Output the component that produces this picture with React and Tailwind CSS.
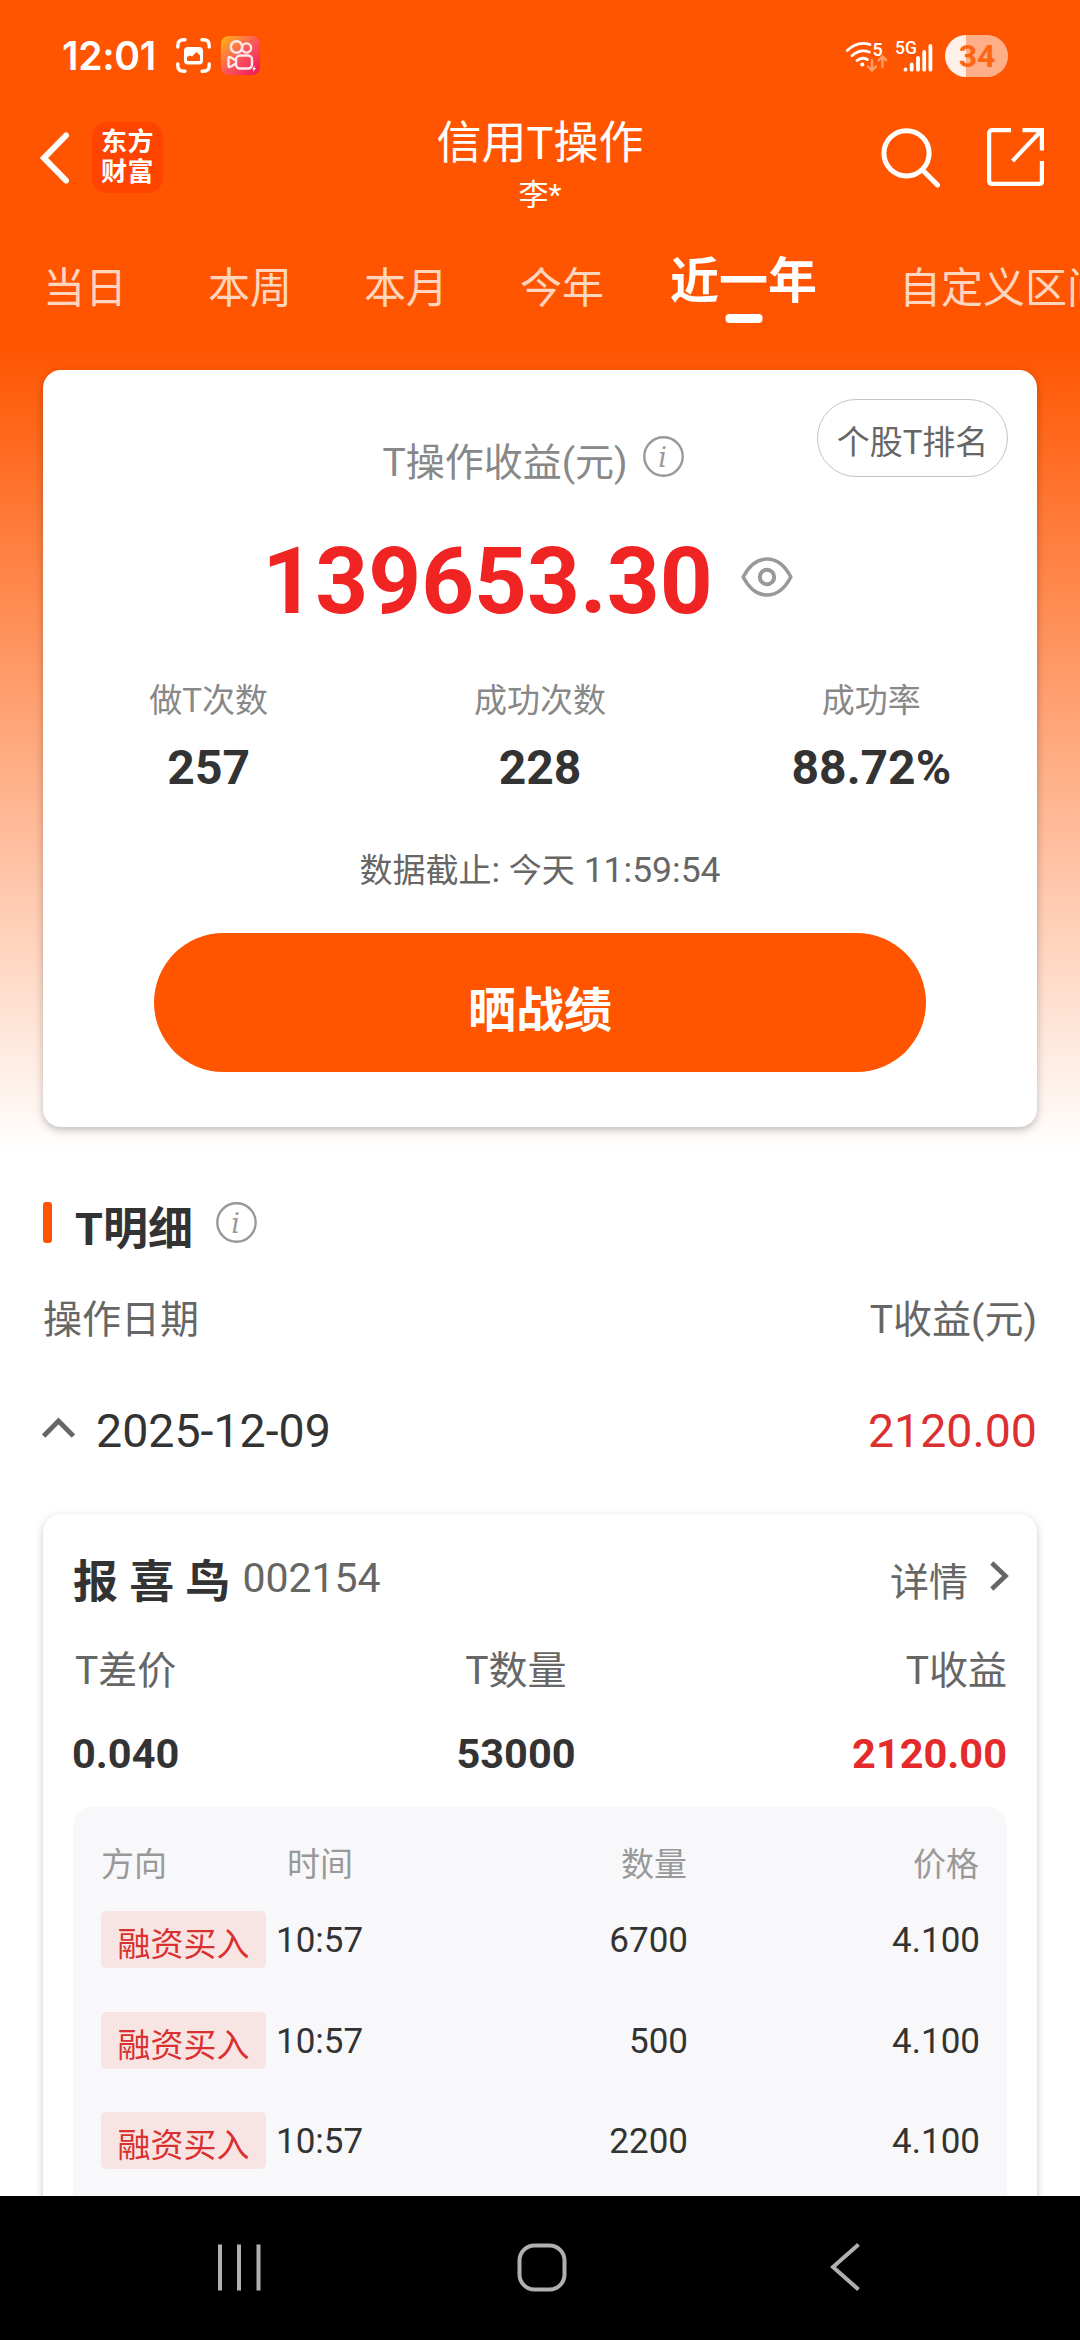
import { useState } from 'react';

const TABS = [
  { label: '当日', className: 'ml-[43px]' },
  { label: '本周', className: 'ml-[81px]' },
  { label: '本月', className: 'ml-[72px]' },
  { label: '今年', className: 'ml-[72px]' },
  { label: '近一年', className: 'ml-[66px]' },
  { label: '自定义区间', className: 'ml-[82px]' },
];

const STATS = [
  { label: '做T次数', value: '257' },
  { label: '成功次数', value: '228' },
  { label: '成功率', value: '88.72%' },
];

const TRADES = [
  { side: '融资买入', time: '10:57', amount: '6700', price: '4.100' },
  { side: '融资买入', time: '10:57', amount: '500', price: '4.100' },
  { side: '融资买入', time: '10:57', amount: '2200', price: '4.100' },
];

function InfoIcon({ className }) {
  return (
    <svg viewBox="0 0 41 41" className={`w-[41px] h-[41px] shrink-0 ${className}`}>
      <circle cx="20.5" cy="20.5" r="19.2" fill="none" stroke="#999" strokeWidth="2.4" />
      <text x="19.5" y="30.5" textAnchor="middle" fontSize="27" fontStyle="italic" fontFamily="DejaVu Serif, serif" fill="#999">i</text>
    </svg>
  );
}

function StatusBar() {
  return (
    <div className="h-[111px] shrink-0 flex items-center pl-[62px] pr-[72px]">
      <span className="w-[96px] text-[39px] leading-[48px] font-semibold font-[Inter,sans-serif] tracking-[-0.3px] whitespace-nowrap">12:01</span>

      {/* screenshot notification */}
      <svg viewBox="0 0 35 35" className="w-[35px] h-[35px] ml-[18px]" fill="none" stroke="white" strokeWidth="3.4" strokeLinecap="round">
        <path d="M1.8 9V7.5Q1.8 1.8 7.5 1.8H9M26 1.8h1.5q5.7 0 5.7 5.7V9M33.2 26v1.5q0 5.7-5.7 5.7H26M9 33.2H7.5q-5.7 0-5.7-5.7V26" />
        <rect x="8" y="9" width="19" height="17.5" rx="4" fill="white" stroke="none" />
        <path d="M11 22v-3l3-1.500 2 1 4.500-4.500 3.500 3.500v4.500q0 1-1 1H12q-1 0-1-1z" fill="#ff5500" stroke="none" />
      </svg>

      {/* kuaishou notification */}
      <svg viewBox="0 0 39 39" className="w-[39px] h-[39px] ml-[10px]" fill="none" stroke="#ffe9f0" strokeWidth="2.4">
        <defs>
          <linearGradient id="ks" x1="0" y1="0" x2="1" y2="1">
            <stop offset="0" stopColor="#fdb913" />
            <stop offset="0.5" stopColor="#fb5a5a" />
            <stop offset="1" stopColor="#f0125c" />
          </linearGradient>
        </defs>
        <rect width="39" height="39" rx="8" fill="url(#ks)" stroke="none" />
        <circle cx="15.5" cy="11" r="5.7" />
        <circle cx="25.5" cy="12" r="4.6" />
        <rect x="15" y="19.5" width="16" height="13" rx="4" />
        <path d="M15 24.5l-5.5-3.2q-2-.8-2 1v7.4q0 1.800 2 1L15 27.500" strokeLinejoin="round" />
        <path d="M33 30.500l-1.800 3h1.500l-.700 2.600 3-4h-1.800l.800-1.600z" fill="white" stroke="none" />
      </svg>

      <div className="ml-auto flex items-center">
        {/* wifi + traffic arrows */}
        <svg viewBox="0 0 42 34" className="w-[42px] h-[34px]" fill="none" stroke="white" strokeLinecap="round">
          <path d="M2.300 11.500Q12.500 1.500 25 5.500M7 16.800Q14.800 9.500 24.300 13M12 21.500Q17 17.500 22.300 20.500" strokeWidth="2.800" />
          <circle cx="17.300" cy="25.500" r="2.100" fill="white" stroke="none" />
          <text x="27.500" y="17" fontSize="18" fontWeight="600" fontFamily="Roboto, sans-serif" fill="white" stroke="none">5</text>
          <path d="M27 21v10M23 27.500l4 4 4-4M37.500 28V18M33.500 21.500l4-4 4 4" stroke="#ff9d6b" strokeWidth="2.400" />
        </svg>
        {/* signal */}
        <svg viewBox="0 0 38 34" className="w-[38px] h-[34px] ml-[8px]" stroke="white" strokeWidth="3.800" strokeLinecap="round">
          <text x="0" y="14.500" fontSize="17.500" fontWeight="500" fontFamily="Roboto, sans-serif" fill="white" stroke="none">5G</text>
          <path d="M10.500 30.500v.2M16.700 25.500v5.200M23 19V30.700M29.200 13V30.700M35.400 7V30.700" fill="none" />
        </svg>
        <div className="w-[63px] h-[42px] ml-[12px] rounded-full overflow-hidden bg-[linear-gradient(90deg,#fff1ea_21px,#ffaf88_21px)] text-[#ff6614] text-[32px] leading-[43px] font-bold text-center pl-[1px]">34</div>
      </div>
    </div>
  );
}

function AppBar() {
  return (
    <header className="h-[104px] shrink-0 grid grid-cols-[1fr_auto_1fr] items-start">
      <div className="flex items-start pl-[40px]">
        <svg viewBox="0 0 29 52" className="w-[29px] h-[52px] mt-[21px]" fill="none" stroke="white" strokeWidth="6" strokeLinecap="round">
          <path d="M26 3.500L4 26l22 22.500" />
        </svg>
        <div className="w-[71px] h-[71px] ml-[23px] mt-[11px] rounded-[15px] bg-[#ff4400] flex flex-col items-center pt-[5px] text-[26px] leading-[30px] font-bold tracking-[0.5px]">
          <span>东方</span>
          <span>财富</span>
        </div>
      </div>
      <div className="flex flex-col items-center pt-[5px]">
        <h1 className="text-[45px] leading-[55px]">信用T操作</h1>
        <span className="text-[30px] leading-[40px] mt-[4px]">李*</span>
      </div>
      <div className="flex items-start justify-end pr-[36px] pt-[17px]">
        <svg viewBox="0 0 60 60" className="w-[60px] h-[60px]" fill="none" stroke="white" strokeWidth="5" strokeLinecap="round">
          <circle cx="25.500" cy="25.300" r="22.600" />
          <path d="M41.500 42L56.500 57" />
        </svg>
        <svg viewBox="0 0 57 58" className="w-[57px] h-[58px] ml-[46px]" fill="none" stroke="white" strokeWidth="4.200">
          <path d="M24 2.100H5.500Q2.100 2.100 2.100 5.500V52.500Q2.100 55.900 5.500 55.900H51.500Q54.900 55.900 54.900 54V33M35.500 2.100H54.900V22.500M54 3L25.500 33" />
        </svg>
      </div>
    </header>
  );
}

function SummaryCard() {
  return (
    <section className="relative mx-[43px] h-[757px] shrink-0 rounded-[18px] bg-white shadow-[0_3px_8px_rgba(0,0,0,0.25)] flex flex-col">
      <button className="absolute right-[29px] top-[29px] w-[191px] h-[78px] rounded-full border border-[#c4c4c4] text-[#666] text-[33px] leading-[44px] pt-[10px]">个股T排名</button>

      <div className="flex items-start justify-center pt-[66px] pr-[14px] text-[#888]">
        <h2 className="text-[39px] leading-[48px] mt-[3px]">T操作收益(元)</h2>
        <InfoIcon className="ml-[15px]" />
      </div>

      <div className="flex items-start justify-center mt-[45px] pr-[25px]">
        <span className="text-[92.300px] leading-[100px] font-bold text-[#f12424]">139653.30</span>
        <svg viewBox="0 0 52 40" className="w-[52px] h-[40px] ml-[28px] mt-[25px]" fill="none" stroke="#999" strokeWidth="3.600">
          <path d="M2.200 20Q11.500 2 26 2T49.800 20Q40.500 38 26 38T2.200 20z" strokeLinejoin="round" />
          <circle cx="26" cy="20" r="7.200" strokeWidth="4" />
        </svg>
      </div>

      <div className="grid grid-cols-3 text-center mt-[49px]">
        {STATS.map((stat) => (
          <div key={stat.label}>
            <div className="text-[33px] leading-[40px] text-[#888]">{stat.label}</div>
            <div className="text-[48px] leading-[60px] mt-[17px] font-bold text-[#333]">{stat.value}</div>
          </div>
        ))}
      </div>

      <p className="text-center text-[35.500px] leading-[40px] mt-[52px] text-[#666]">
        <span className="text-[33px]">数据截止</span>: <span className="text-[33px]">今天</span> 11:59:54
      </p>
      <button className="mx-[111px] h-[139px] mt-[42px] pb-[18px] pt-[35px] rounded-full bg-[#ff5500] text-white text-[48px] leading-[60px] font-bold">晒战绩</button>
    </section>
  );
}

function DetailCard() {
  return (
    <section className="mx-[43px] mt-[53px] h-[760px] shrink-0 rounded-[18px] bg-white shadow-[0_3px_8px_rgba(0,0,0,0.22)] px-[30px]">
      <div className="flex items-start pt-[39px]">
        <h3 className="text-[45px] leading-[60px] font-bold text-[#333] whitespace-pre">报 喜 鸟</h3>
        <span className="text-[41px] leading-[50px] ml-[12px] text-[#666]">002154</span>
        <span className="ml-auto text-[39px] leading-[60px] text-[#666]">详情</span>
        <svg viewBox="0 0 19 30" className="w-[19px] h-[30px] ml-[22px] mr-[-2px] mt-[8px]" fill="none" stroke="#666" strokeWidth="4.600">
          <path d="M1.800 2L15.500 15L1.800 28" />
        </svg>
      </div>

      <div className="grid grid-cols-3 mt-[33px] text-[39px] leading-[50px] text-[#666]">
        <span className="pl-[2px]">T差价</span>
        <span className="text-center pr-[48px]">T数量</span>
        <span className="text-right">T收益</span>
      </div>
      <div className="grid grid-cols-3 mt-[33px] text-[41.500px] leading-[50px] font-bold text-[#333]">
        <span className="-ml-[1px]">0.040</span>
        <span className="text-center pr-[48px]">53000</span>
        <span className="text-right text-[#e42a2a]">2120.00</span>
      </div>

      <div className="mt-[28px] h-[440px] rounded-[18px] bg-[#f8f8fa] px-[28px] pt-[38px]">
        <div className="flex mb-[16px] text-[33px] leading-[40px] text-[#999]">
          <span className="w-[186px]">方向</span>
          <span className="w-[100px]">时间</span>
          <span className="w-[300px] text-right">数量</span>
          <span className="flex-1 text-right">价格</span>
        </div>
        {TRADES.map((trade, i) => (
          <div key={i} className="flex items-start h-[100.500px] pt-[10px] text-[35px] leading-[60px] text-[#333]">
            <span className="w-[165px] h-[57px] rounded-[5px] bg-[#f9e4e4] text-[#d93030] text-[33px] leading-[67px] text-center">{trade.side}</span>
            <span className="w-[100px] pl-[10px]">{trade.time}</span>
            <span className="w-[322px] text-right">{trade.amount}</span>
            <span className="flex-1 text-right -mr-[1px]">{trade.price}</span>
          </div>
        ))}
      </div>
    </section>
  );
}

function SystemNav() {
  return (
    <nav className="h-[144px] shrink-0 bg-black flex items-center pl-[218px] pr-[220px] pb-[2px] justify-between">
      <svg viewBox="0 0 43 48" className="w-[43px] h-[48px]" stroke="#b0b0b0" strokeWidth="4">
        <path d="M2 1.500v46M21 1.500v46M40.500 1.500v46" />
      </svg>
      <svg viewBox="0 0 50 49" className="w-[50px] h-[49px] mr-[8px]" fill="none" stroke="#b0b0b0" strokeWidth="4">
        <rect x="2.500" y="2.500" width="45" height="44" rx="15" />
      </svg>
      <svg viewBox="0 0 30 48" className="w-[30px] h-[48px]" fill="none" stroke="#b0b0b0" strokeWidth="4">
        <path d="M28.500 1.500L3 24l25.500 22.500" />
      </svg>
    </nav>
  );
}

export default function App() {
  const [active, setActive] = useState('近一年');

  return (
    <div className="w-[1080px] h-[2340px] overflow-hidden flex flex-col bg-white font-[Roboto,'Noto_Sans_CJK_SC',sans-serif]">
      <div className="h-[2196px] shrink-0 overflow-hidden flex flex-col bg-[linear-gradient(#ff5500_345px,#ffffff_1150px)]">
        <div className="text-white">
          <StatusBar />
          <AppBar />
        </div>

        {/* PERIOD TABS */}
        <div className="h-[155px] shrink-0 flex items-start overflow-hidden whitespace-nowrap">
          {TABS.map((tab) => (
            <button
              key={tab.label}
              onClick={() => setActive(tab.label)}
              className={`relative shrink-0 ${tab.className} ${
                active === tab.label
                  ? 'text-white text-[49px] leading-[60px] font-bold mt-[37px]'
                  : 'text-[#ffd5bf] text-[42px] leading-[60px] mt-[44px]'
              }`}
            >
              {tab.label}
              {active === tab.label && (
                <span className="absolute left-1/2 -translate-x-1/2 top-[62px] w-[37px] h-[9px] rounded-[4px] bg-white" />
              )}
            </button>
          ))}
        </div>

        <SummaryCard />

        {/* T DETAILS */}
        <div className="flex items-start mt-[75px] ml-[43px] h-[93px] shrink-0">
          <span className="w-[9px] h-[41px] rounded-[3px] bg-[#ff5500]" />
          <h2 className="text-[45px] leading-[56px] ml-[23px] font-bold text-[#333]">T明细</h2>
          <InfoIcon className="ml-[23px]" />
        </div>
        <div className="flex justify-between pl-[43px] pr-[43px] text-[39px] leading-[50px] text-[#666]">
          <span>操作日期</span>
          <span>T收益(元)</span>
        </div>
        <div className="flex items-center mt-[56px] pl-[42px] pr-[43px] text-[46.500px] leading-[60px] text-[#333]">
          <svg viewBox="0 0 33 22" className="w-[33px] h-[22px] -mt-[9px]" fill="none" stroke="#666" strokeWidth="4.800">
            <path d="M1.600 20L16.500 5L31.400 20" />
          </svg>
          <span className="ml-[21px]">2025-12-09</span>
          <span className="ml-auto text-[#dc3030]">2120.00</span>
        </div>

        <DetailCard />
      </div>
      <SystemNav />
    </div>
  );
}
